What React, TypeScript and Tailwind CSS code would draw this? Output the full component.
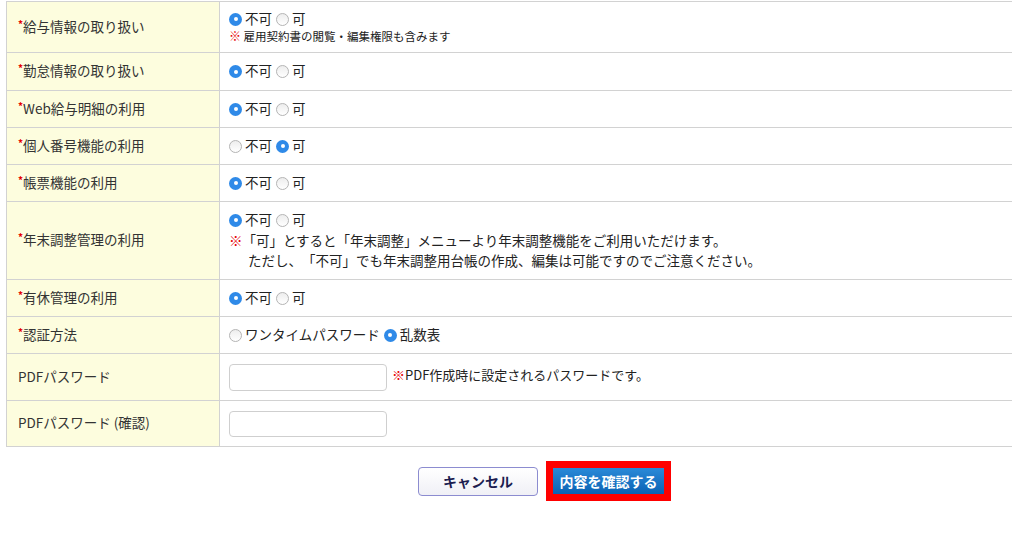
import React from "react";

const FONT = { fontFamily: '"Noto Sans CJK JP", "Noto Sans", sans-serif' };

function Radio({ checked }: { checked: boolean }) {
  return checked ? (
    <span className="inline-flex h-[13px] w-[13px] shrink-0 items-center justify-center rounded-full bg-[#2f8ae8]">
      <span className="h-[4px] w-[4px] rounded-full bg-white" />
    </span>
  ) : (
    <span className="inline-block h-[13px] w-[13px] shrink-0 rounded-full border border-[#b4b4b4] bg-gradient-to-b from-[#ededed] to-white" />
  );
}

function RadioGroup({ options, selected }: { options: string[]; selected: number }) {
  return (
    <div className="flex items-center text-[13.5px] leading-[17px] text-[#222]">
      {options.map((o, i) => (
        <span key={o} className={`flex items-center ${i > 0 ? "ml-[4px]" : ""}`}>
          <Radio checked={i === selected} />
          <span className="relative -top-[1px] ml-[3px]">{o}</span>
        </span>
      ))}
    </div>
  );
}

function Row({
  label,
  required,
  h,
  children,
}: {
  label: string;
  required?: boolean;
  h: string;
  children: React.ReactNode;
}) {
  return (
    <div className={`flex border-b border-[#d2d2d2] ${h}`}>
      <div className="flex w-[213px] shrink-0 items-center border-r border-[#d2d2d2] bg-[#fdfdde] pl-[11px] text-[13.5px] text-[#333]">
        <div className="relative -top-[1px] flex items-center">
          {required && <span className="relative -top-[3px] text-[10px] font-bold text-[#e60000]">*</span>}
          <span>{label}</span>
        </div>
      </div>
      <div className="flex flex-1 flex-col justify-center pl-[9px]">{children}</div>
    </div>
  );
}

export default function App() {
  const ng = ["不可", "可"];
  return (
    <div className="h-[533px] w-[1012px] overflow-hidden bg-white [text-spacing-trim:space-all]" style={FONT}>
      <div className="ml-[6px] mt-[1px] w-[1020px] border-l border-t border-[#d2d2d2]">
        <Row label="給与情報の取り扱い" required h="h-[51px]">
          <RadioGroup options={ng} selected={0} />
          <div className="text-[11.5px] leading-[16px] text-[#222]">
            <span className="text-[12px] font-bold text-[#e60000]">※</span> 雇用契約書の閲覧・編集権限も含みます
          </div>
        </Row>
        <Row label="勤怠情報の取り扱い" required h="h-[38px]">
          <RadioGroup options={ng} selected={0} />
        </Row>
        <Row label="Web給与明細の利用" required h="h-[37px]">
          <RadioGroup options={ng} selected={0} />
        </Row>
        <Row label="個人番号機能の利用" required h="h-[37px]">
          <RadioGroup options={ng} selected={1} />
        </Row>
        <Row label="帳票機能の利用" required h="h-[37px]">
          <RadioGroup options={ng} selected={0} />
        </Row>
        <Row label="年末調整管理の利用" required h="h-[78px]">
          <RadioGroup options={ng} selected={0} />
          <div className="mt-[1px] text-[13.5px] leading-[20px] text-[#222]">
            <div>
              <span className="text-[#e60000]">※</span>「可」とすると「年末調整」メニューより年末調整機能をご利用いただけます。
            </div>
            <div className="pl-[19px]">ただし、「不可」でも年末調整用台帳の作成、編集は可能ですのでご注意ください。</div>
          </div>
        </Row>
        <Row label="有休管理の利用" required h="h-[37px]">
          <RadioGroup options={ng} selected={0} />
        </Row>
        <Row label="認証方法" required h="h-[37px]">
          <RadioGroup options={["ワンタイムパスワード", "乱数表"]} selected={1} />
        </Row>
        <Row label="PDFパスワード" h="h-[47px]">
          <div className="flex items-center">
            <input
              type="password"
              className="h-[27px] w-[158px] rounded-[4px] border border-[#cfcfcf] bg-white outline-none"
            />
            <span className="relative -top-[2px] ml-[5px] text-[13px] text-[#222]">
              <span className="text-[#e60000]">※</span>PDF作成時に設定されるパスワードです。
            </span>
          </div>
        </Row>
        <Row label="PDFパスワード (確認)" h="h-[46px]">
          <input
            type="password"
            className="h-[26px] w-[158px] rounded-[4px] border border-[#cfcfcf] bg-white outline-none"
          />
        </Row>
      </div>
      <div className="mt-[14px] flex items-center justify-center pl-[77px]">
        <button className="h-[29px] w-[120px] rounded-[4px] border-[1.5px] border-[#8c8cd0] bg-gradient-to-b from-white to-[#f0f0f6] text-[14px] font-bold text-[#1c1c50]">
          キャンセル
        </button>
        <div className="ml-[8px] border-[7px] border-[#ff0000] bg-[#ff0000]">
          <button className="block h-[26px] w-[111px] bg-gradient-to-b from-[#2a8ad8] to-[#0a62b4] text-[14px] font-bold text-white">
            内容を確認する
          </button>
        </div>
      </div>
    </div>
  );
}
